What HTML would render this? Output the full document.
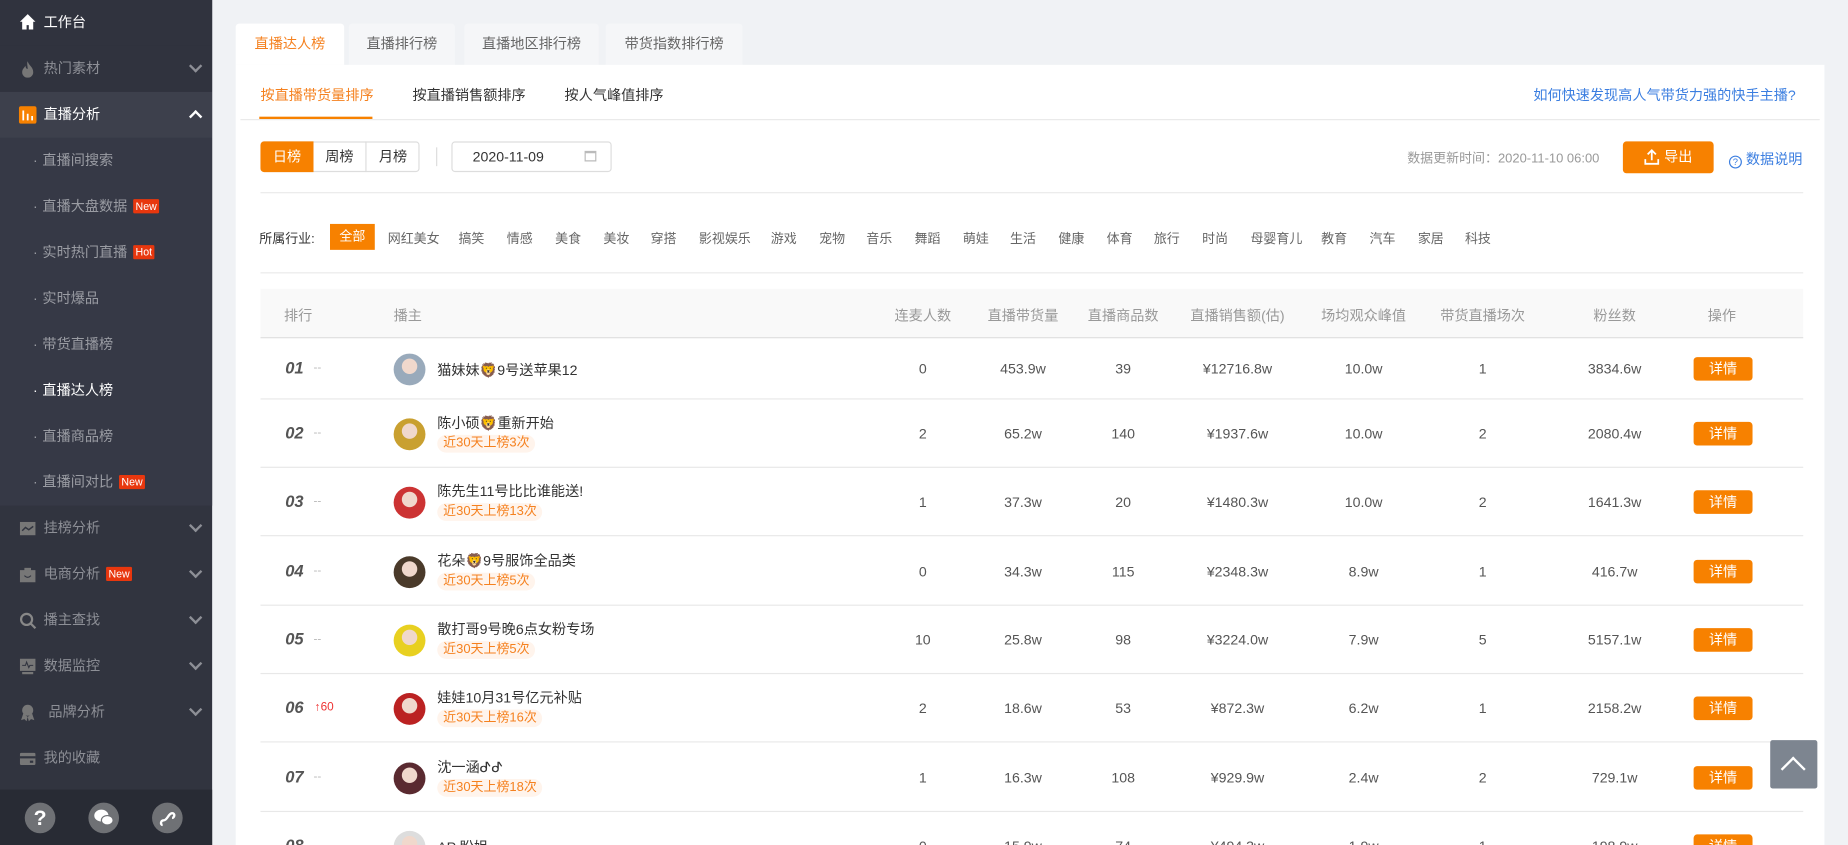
<!DOCTYPE html>
<html><head><meta charset="utf-8"><style>
*{margin:0;padding:0;box-sizing:border-box}
html,body{width:1848px;height:845px;overflow:hidden;background:#f0f2f5}
#w{position:absolute;left:0;top:0;width:1568px;height:717px;overflow:hidden;transform:scale(1.17857);transform-origin:0 0;font-family:"Liberation Sans","Noto Sans CJK SC",sans-serif;font-size:12px;color:#333}
.sb{position:absolute;left:0;top:0;width:180px;height:717px;background:#31343f}
.sb .it{position:absolute;left:0;width:180px;height:39px;line-height:39px;color:#8d8f96;font-size:12px;padding-left:37px}
.sb .ic{position:absolute;left:16px;top:12px;width:15px;height:15px}
.sb .ar{position:absolute;right:10px;top:13px;width:8px;height:8px;border-right:2px solid #8d8f96;border-bottom:2px solid #8d8f96;transform:rotate(45deg)}
.sub{position:absolute;left:0;top:117px;width:180px;height:312px;background:#363946}
.sub div{height:39px;line-height:39px;color:#9a9ca3;padding-left:30px;position:relative}
.sub div:before{content:"·";position:absolute;left:28px}
.sub div span.t{margin-left:6px}
.tag{display:inline-block;background:#e8370e;color:#fff;font-size:9px;line-height:12px;padding:0 2px;margin-left:5px;vertical-align:1px;border-radius:1px}
.foot{position:absolute;left:0;top:670px;height:47px;background:#282b34;width:180px}
.fi{position:absolute;top:11px;width:26px;height:26px;border-radius:50%;background:#6f7175;color:#fff;text-align:center;line-height:26px;font-weight:bold;font-size:18px}
.tabs{position:absolute;left:200px;top:20px}
.tab{position:absolute;top:0;height:35px;line-height:35px;text-align:center;background:#f5f6f8;color:#666;font-size:12px;border-radius:3px 3px 0 0}
.card{position:absolute;left:200px;top:55px;width:1348px;height:680px;background:#fff}
.hl{position:absolute;height:1px;background:#eaeaea}
.ind{position:absolute;top:194px;font-size:11px;color:#666}
.th{position:absolute;top:259px;color:#999;font-size:12px;text-align:center}
.row{position:absolute;left:221px;width:1309px;border-bottom:1px solid #e8e8e8}
.c{position:absolute;text-align:center;color:#555;font-size:12px}
.rk{position:absolute;font-weight:bold;font-style:italic;font-size:14px;color:#555}
.av{position:absolute;width:27px;height:27px;border-radius:50%}
.nm{position:absolute;font-size:12px;color:#333;white-space:nowrap}
.bd{position:absolute;background:#fff4ec;color:#f5811f;font-size:11px;padding:0 5px;border-radius:8px;line-height:15px}
.btn{position:absolute;width:50px;height:20px;background:#f78100;color:#fff;border-radius:3px;text-align:center;line-height:20px;font-size:12px}
</style></head><body><div id="w">
<div class="sb">
 <div class="it" style="top:0;color:#fff;background:#30333e">工作台<svg class="ic" viewBox="0 0 16 16" style="top:11px"><path d="M8 1L1 8h2v7h4v-4h2v4h4V8h2z" fill="#fff"/></svg></div>
 <div class="it" style="top:39px;background:#30333e">热门素材<svg class="ic" viewBox="0 0 16 16"><path d="M8 1C9 5 13 6 13 11a5 5 0 01-10 0c0-3 2-4 3-6 0 2 1 3 2 3 0-3-1-5 0-7z" fill="#777"/></svg><span class="ar"></span></div>
 <div class="it" style="top:78px;height:39px;background:#3d404c;color:#fff">直播分析<svg class="ic" viewBox="0 0 16 16"><rect width="16" height="16" rx="2" fill="#f78100"/><path d="M4 4v9M8 7v6M12 9v4" stroke="#fff" stroke-width="1.6"/></svg><span class="ar" style="transform:rotate(225deg);top:17px;border-color:#fff"></span></div>
 <div class="sub">
  <div><span class="t">直播间搜索</span></div>
  <div><span class="t">直播大盘数据</span><span class="tag">New</span></div>
  <div><span class="t">实时热门直播</span><span class="tag">Hot</span></div>
  <div><span class="t">实时爆品</span></div>
  <div><span class="t">带货直播榜</span></div>
  <div style="color:#fff"><span class="t">直播达人榜</span></div>
  <div><span class="t">直播商品榜</span></div>
  <div><span class="t">直播间对比</span><span class="tag">New</span></div>
 </div>
 <div class="it" style="top:429px">挂榜分析<svg class="ic" viewBox="0 0 16 16"><rect x="1" y="2" width="14" height="12" fill="#777"/><path d="M3 10l3-3 3 2 4-3" stroke="#31343f" fill="none" stroke-width="1.3"/></svg><span class="ar"></span></div>
 <div class="it" style="top:468px">电商分析<span class="tag">New</span><svg class="ic" viewBox="0 0 16 16"><path d="M5 4V2h6v2h4v11H1V4z" fill="#777"/><path d="M5 9q3 3 6 0" stroke="#31343f" fill="none"/></svg><span class="ar"></span></div>
 <div class="it" style="top:507px">播主查找<svg class="ic" viewBox="0 0 16 16"><circle cx="7" cy="7" r="5" stroke="#888" stroke-width="2" fill="none"/><path d="M11 11l4 4" stroke="#888" stroke-width="2"/></svg><span class="ar"></span></div>
 <div class="it" style="top:546px">数据监控<svg class="ic" viewBox="0 0 16 16"><rect x="1" y="1" width="14" height="11" fill="#777"/><path d="M3 7h3l1-3 2 5 1-2h3" stroke="#31343f" fill="none"/><rect x="3" y="13" width="10" height="2" fill="#777"/></svg><span class="ar"></span></div>
 <div class="it" style="top:585px;padding-left:41px">品牌分析<svg class="ic" viewBox="0 0 16 16"><circle cx="8" cy="6" r="5" fill="#777"/><path d="M4 9l-2 6 3-1 2 2 1-4M12 9l2 6-3-1-2 2-1-4" fill="#777"/></svg><span class="ar"></span></div>
 <div class="it" style="top:624px">我的收藏<svg class="ic" viewBox="0 0 16 16"><rect x="1" y="3" width="14" height="11" rx="1" fill="#777"/><rect x="1" y="6" width="14" height="2" fill="#31343f"/><rect x="10" y="10" width="3" height="2" fill="#31343f"/></svg></div>
 <div class="foot">
  <div class="fi" style="left:21px">?</div>
  <div class="fi" style="left:75px"><svg width="26" height="26" viewBox="0 0 26 26"><ellipse cx="11" cy="11" rx="6" ry="5" fill="#fff"/><ellipse cx="16" cy="15" rx="5" ry="4" fill="#fff" stroke="#6f7175"/></svg></div>
  <div class="fi" style="left:129px"><svg width="26" height="26" viewBox="0 0 26 26"><path d="M9 19c-2 0-2-4 1-4s4-6 7-6 2 4 0 4" stroke="#fff" stroke-width="2" fill="none"/></svg></div>
 </div>
</div>
<div class="tabs">
 <div class="tab" style="left:0;width:92px;background:#fff;color:#f5811f">直播达人榜</div>
 <div class="tab" style="left:96px;width:90px">直播排行榜</div>
 <div class="tab" style="left:194px;width:114px">直播地区排行榜</div>
 <div class="tab" style="left:314px;width:116px">带货指数排行榜</div>
</div>
<div class="card"></div>
<div style="position:absolute;left:221px;top:72px;color:#f5811f">按直播带货量排序</div>
<div style="position:absolute;left:220px;top:99px;width:96px;height:2px;background:#f78100"></div>
<div style="position:absolute;left:350px;top:72px;color:#333">按直播销售额排序</div>
<div style="position:absolute;left:479px;top:72px;color:#333">按人气峰值排序</div>
<div style="position:absolute;left:1301px;top:72px;color:#3b7ee0">如何快速发现高人气带货力强的快手主播?</div>
<div class="hl" style="left:204px;top:101px;width:1340px"></div>
<div style="position:absolute;left:221px;top:120px;width:135px;height:26px;border:1px solid #ddd;border-radius:3px;background:#fff"></div>
<div style="position:absolute;left:221px;top:120px;width:45px;height:26px;background:#f78100;color:#fff;line-height:26px;text-align:center;border-radius:3px 0 0 3px;font-size:12px">日榜</div>
<div style="position:absolute;left:266px;top:120px;width:45px;height:26px;line-height:26px;text-align:center;border-right:1px solid #ddd">周榜</div>
<div style="position:absolute;left:311px;top:120px;width:45px;height:26px;line-height:26px;text-align:center">月榜</div>
<div style="position:absolute;left:370px;top:125px;width:1px;height:16px;background:#ddd"></div>
<div style="position:absolute;left:383px;top:120px;width:136px;height:26px;border:1px solid #ddd;border-radius:3px;line-height:24px;padding-left:17px;font-size:12px">2020-11-09<span style="position:absolute;right:12px;top:7px;width:10px;height:9px;border:1px solid #bbb;border-top-width:2px"></span></div>
<div style="position:absolute;left:1194px;top:126px;color:#999;font-size:11px">数据更新时间：2020-11-10 06:00</div>
<div style="position:absolute;left:1377px;top:120px;width:77px;height:27px;background:#f78100;border-radius:3px;color:#fff;line-height:27px;font-size:12px;padding-left:35px"><svg style="position:absolute;left:18px;top:6px" width="13" height="14" viewBox="0 0 13 14"><path d="M6.5 10V2M3 5l3.5-3.5L10 5M1 9v4h11V9" stroke="#fff" stroke-width="1.5" fill="none"/></svg>导出</div>
<div style="position:absolute;left:1467px;top:126px;color:#3b7ee0;font-size:12px"><span style="display:inline-block;width:11px;height:11px;border:1px solid #3b7ee0;border-radius:50%;font-size:8px;line-height:9px;text-align:center;vertical-align:-1px">?</span> 数据说明</div>
<div class="hl" style="left:221px;top:163px;width:1309px"></div>
<div class="ind" style="left:220px;color:#333">所属行业:</div>
<div style="position:absolute;left:280px;top:190px;width:38px;height:22px;background:#f78100;color:#fff;text-align:center;line-height:22px;font-size:11px">全部</div>
<div class="ind" style="left:329px">网红美女</div><div class="ind" style="left:389px">搞笑</div><div class="ind" style="left:430px">情感</div><div class="ind" style="left:471px">美食</div><div class="ind" style="left:512px">美妆</div><div class="ind" style="left:552px">穿搭</div><div class="ind" style="left:593px">影视娱乐</div><div class="ind" style="left:654px">游戏</div><div class="ind" style="left:695px">宠物</div><div class="ind" style="left:735px">音乐</div><div class="ind" style="left:776px">舞蹈</div><div class="ind" style="left:817px">萌娃</div><div class="ind" style="left:857px">生活</div><div class="ind" style="left:898px">健康</div><div class="ind" style="left:939px">体育</div><div class="ind" style="left:979px">旅行</div><div class="ind" style="left:1020px">时尚</div><div class="ind" style="left:1061px">母婴育儿</div><div class="ind" style="left:1121px">教育</div><div class="ind" style="left:1162px">汽车</div><div class="ind" style="left:1203px">家居</div><div class="ind" style="left:1243px">科技</div>
<div class="hl" style="left:221px;top:231px;width:1309px"></div>
<div style="position:absolute;left:221px;top:245px;width:1309px;height:42px;background:#f9f9f9;border-bottom:1px solid #e0e0e0"></div>
<div class="th" style="left:241px">排行</div><div class="th" style="left:334px">播主</div>
<div class="th" style="left:743px;width:80px">连麦人数</div><div class="th" style="left:828px;width:80px">直播带货量</div><div class="th" style="left:913px;width:80px">直播商品数</div><div class="th" style="left:995px;width:110px">直播销售额(估)</div><div class="th" style="left:1107px;width:100px">场均观众峰值</div><div class="th" style="left:1208px;width:100px">带货直播场次</div><div class="th" style="left:1320px;width:100px">粉丝数</div><div class="th" style="left:1421px;width:80px">操作</div>
<div id="rows"></div>
<div style="position:absolute;left:1502px;top:628px;width:40px;height:41px;background:#7d8590;border-radius:2px"><div style="position:absolute;left:12px;top:17px;width:15px;height:15px;border-left:2px solid #fff;border-top:2px solid #fff;transform:rotate(45deg)"></div></div>
</div>
<script>
var d=[
["01","猫妹妹🦁9号送苹果12","",0,"453.9w",39,"¥12716.8w","10.0w",1,"3834.6w","#9ab","",287,52],
["02","陈小硕🦁重新开始","近30天上榜3次",2,"65.2w",140,"¥1937.6w","10.0w",2,"2080.4w","#c9a030","",339,58],
["03","陈先生11号比比谁能送!","近30天上榜13次",1,"37.3w",20,"¥1480.3w","10.0w",2,"1641.3w","#c33","",397,58],
["04","花朵🦁9号服饰全品类","近30天上榜5次",0,"34.3w",115,"¥2348.3w","8.9w",1,"416.7w","#4a3a2a","",455,59],
["05","散打哥9号晚6点女粉专场","近30天上榜5次",10,"25.8w",98,"¥3224.0w","7.9w",5,"5157.1w","#e8d020","",514,58],
["06","娃娃10月31号亿元补贴","近30天上榜16次",2,"18.6w",53,"¥872.3w","6.2w",1,"2158.2w","#b22","↑60",572,58],
["07","沈一涵ᕷᕷ","近30天上榜18次",1,"16.3w",108,"¥929.9w","2.4w",2,"729.1w","#5a2a30","",630,59],
["08","AP 盼姐","",0,"15.9w",74,"¥494.3w","1.9w",1,"198.9w","#ddd","",689,58]];
var cx=[783,868,953,1050,1157,1258,1370];
var h="";
d.forEach(function(r){var t=r[12],hh=r[13],m=t+hh/2;
h+='<div class="row" style="top:'+t+'px;height:'+hh+'px"></div>';
h+='<div class="rk" style="left:242px;top:'+(m-9)+'px">'+r[0]+'</div>';
h+=r[11]?'<div style="position:absolute;left:267px;top:'+(m-6)+'px;color:#e33;font-size:10px">'+r[11]+'</div>':'<div style="position:absolute;left:266px;top:'+(m-6)+'px;color:#bbb;font-size:10px">--</div>';
h+='<div class="av" style="left:334px;top:'+(m-13)+'px;background:radial-gradient(circle at 50% 40%,#f0d8cc 30%,'+r[10]+' 32%)"></div>';
if(r[2]){h+='<div class="nm" style="left:371px;top:'+(m-18)+'px">'+r[1]+'</div><div class="bd" style="left:371px;top:'+(m+1)+'px">'+r[2]+'</div>';}
else h+='<div class="nm" style="left:371px;top:'+(m-8)+'px">'+r[1]+'</div>';
[r[3],r[4],r[5],r[6],r[7],r[8],r[9]].forEach(function(v,i){h+='<div class="c" style="left:'+(cx[i]-50)+'px;width:100px;top:'+(m-7)+'px">'+v+'</div>';});
h+='<div class="btn" style="left:1437px;top:'+(m-10)+'px">详情</div>';});
document.getElementById("rows").innerHTML=h;
</script>
</body></html>
